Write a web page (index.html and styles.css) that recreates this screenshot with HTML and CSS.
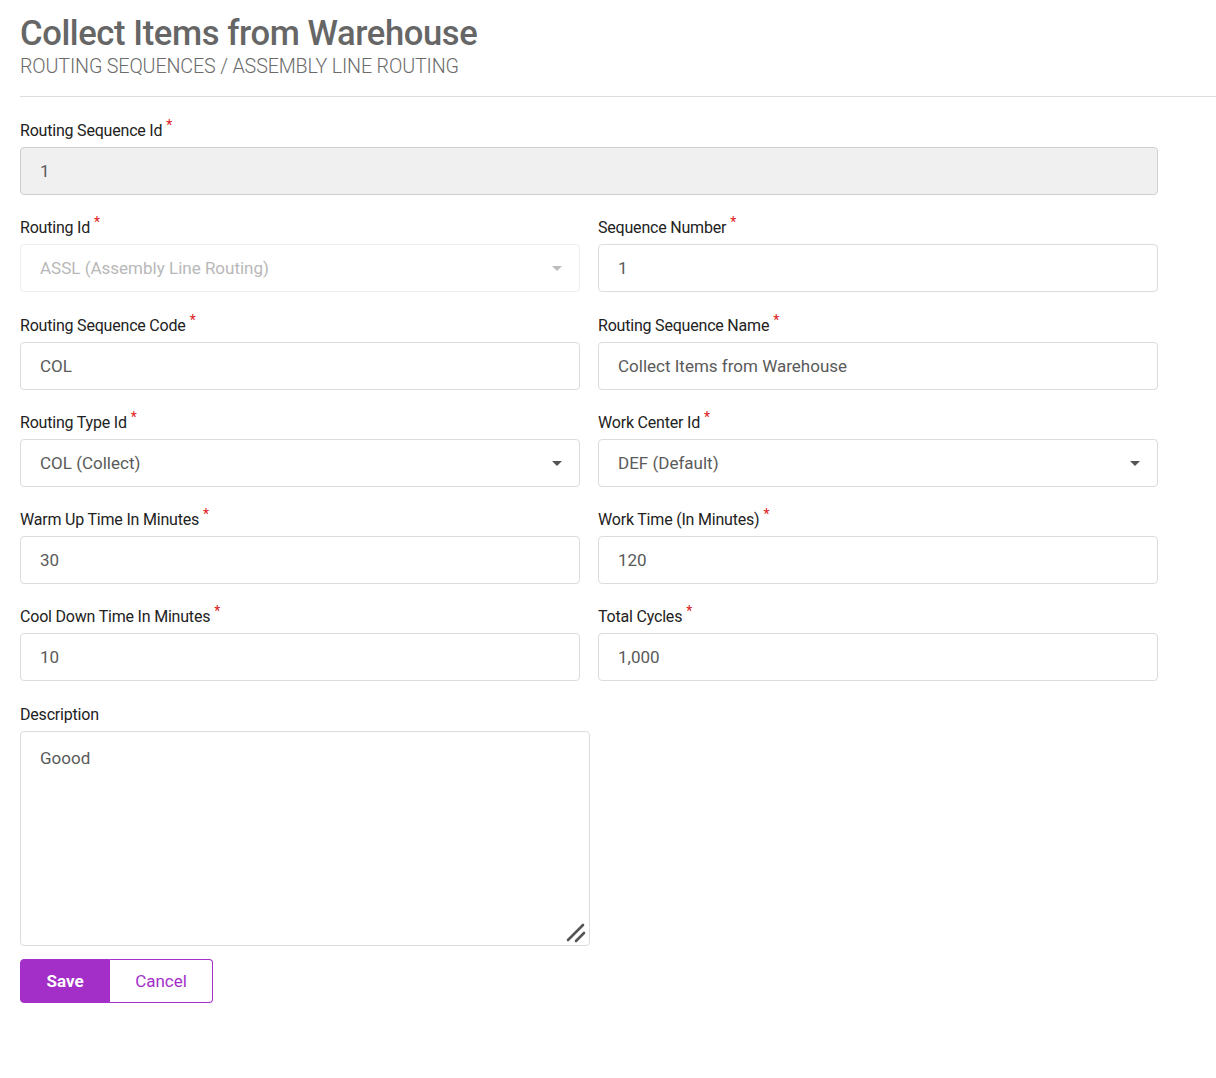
FILE: index.html
```html
<!DOCTYPE html>
<html>
<head>
<meta charset="utf-8">
<link rel="stylesheet" href="styles.css">
</head>
<body>
<div class="page">
  <header class="header">
    <h1 class="title">Collect Items from Warehouse</h1>
    <div class="crumb">ROUTING SEQUENCES / ASSEMBLY LINE ROUTING</div>
  </header>
  <form class="form">
    <div class="field full">
      <label class="label">Routing Sequence Id<span class="req">*</span></label>
      <div class="input readonly">1</div>
    </div>
    <div class="field">
      <label class="label">Routing Id<span class="req">*</span></label>
      <div class="input select disabled">ASSL (Assembly Line Routing)<span class="caret"></span></div>
    </div>
    <div class="field">
      <label class="label">Sequence Number<span class="req">*</span></label>
      <div class="input">1</div>
    </div>
    <div class="field">
      <label class="label">Routing Sequence Code<span class="req">*</span></label>
      <div class="input">COL</div>
    </div>
    <div class="field">
      <label class="label">Routing Sequence Name<span class="req">*</span></label>
      <div class="input">Collect Items from Warehouse</div>
    </div>
    <div class="field">
      <label class="label">Routing Type Id<span class="req">*</span></label>
      <div class="input select">COL (Collect)<span class="caret"></span></div>
    </div>
    <div class="field">
      <label class="label">Work Center Id<span class="req">*</span></label>
      <div class="input select">DEF (Default)<span class="caret"></span></div>
    </div>
    <div class="field">
      <label class="label">Warm Up Time In Minutes<span class="req">*</span></label>
      <div class="input">30</div>
    </div>
    <div class="field">
      <label class="label">Work Time (In Minutes)<span class="req">*</span></label>
      <div class="input">120</div>
    </div>
    <div class="field">
      <label class="label">Cool Down Time In Minutes<span class="req">*</span></label>
      <div class="input">10</div>
    </div>
    <div class="field">
      <label class="label">Total Cycles<span class="req">*</span></label>
      <div class="input">1,000</div>
    </div>
    <div class="field full desc">
      <label class="label">Description</label>
      <div class="textarea-wrap">
        <textarea class="textarea">Goood</textarea>
        <svg class="grip" width="22" height="22" viewBox="0 0 22 22">
          <line x1="3" y1="19" x2="18" y2="4" stroke="#555" stroke-width="2.6" stroke-linecap="round"/>
          <line x1="11" y1="20" x2="19" y2="12" stroke="#555" stroke-width="2.6" stroke-linecap="round"/>
        </svg>
      </div>
    </div>
  </form>
  <div class="actions">
    <button class="btn save" type="button">Save</button>
    <button class="btn cancel" type="button">Cancel</button>
  </div>
</div>
</body>
</html>
```
FILE: styles.css
```css
* { box-sizing: border-box; }
body {
  margin: 0;
  font-family: Roboto, "Liberation Sans", sans-serif;
  color: #333;
  background: #fff;
}
.page {
  padding: 12px 0 0 20px;
}
.header {
  border-bottom: 1px solid #ddd;
  padding-bottom: 16px;
}
.title {
  margin: 0;
  font-size: 34.6px;
  line-height: 42px;
  font-weight: 500;
  color: #666;
  letter-spacing: -0.4px;
}
.crumb {
  font-size: 19.7px;
  line-height: 26px;
  font-weight: 300;
  color: #6b6b6b;
  letter-spacing: -0.15px;
}
.form {
  width: 1138px;
  display: grid;
  grid-template-columns: 560px 560px;
  column-gap: 18px;
  padding-top: 24px;
}
.field {
  display: flex;
  flex-direction: column;
  margin-bottom: 23.3px;
}
.field.full { grid-column: 1 / span 2; }
.field.desc { margin-bottom: 13px; }
.label {
  font-size: 16px;
  line-height: 20px;
  color: #222;
  margin-bottom: 6px;
  letter-spacing: -0.2px;
}
.req {
  color: #e02020;
  font-size: 14px;
  vertical-align: 6px;
  line-height: 0;
  margin-left: 4px;
}
.input {
  position: relative;
  height: 48px;
  border: 1px solid #dcdcdc;
  border-radius: 4px;
  padding: 0 19px;
  display: flex;
  align-items: center;
  font-size: 17px;
  color: #5a5a5a;
  background: #fff;
}
.input.readonly {
  background: #f0f0f0;
  border-color: #cfcfcf;
}
.input.disabled {
  color: #b8b8b8;
  border-color: #eee;
}
.caret {
  position: absolute;
  right: 17px;
  top: 50%;
  margin-top: -2px;
  width: 0;
  height: 0;
  border-left: 5px solid transparent;
  border-right: 5px solid transparent;
  border-top: 5px solid #555;
}
.disabled .caret { border-top-color: #bbb; }
.textarea-wrap {
  position: relative;
  width: 570px;
  height: 215px;
}
.textarea {
  display: block;
  width: 570px;
  height: 215px;
  border: 1px solid #dcdcdc;
  border-radius: 4px;
  padding: 16px 19px;
  font-family: Roboto, "Liberation Sans", sans-serif;
  font-size: 17px;
  color: #5a5a5a;
  resize: none;
}
.grip {
  position: absolute;
  right: 3px;
  bottom: 3px;
}
.actions {
  display: flex;
}
.btn {
  height: 44px;
  font-family: Roboto, "Liberation Sans", sans-serif;
  font-size: 17px;
  border: 1px solid #a32fc8;
  cursor: pointer;
}
.save {
  width: 90px;
  background: #a32fc8;
  color: #fff;
  font-weight: 700;
  border-radius: 4px 0 0 4px;
}
.cancel {
  width: 103px;
  background: #fff;
  color: #a32fc8;
  border-left: none;
  border-radius: 0 4px 4px 0;
}
```
